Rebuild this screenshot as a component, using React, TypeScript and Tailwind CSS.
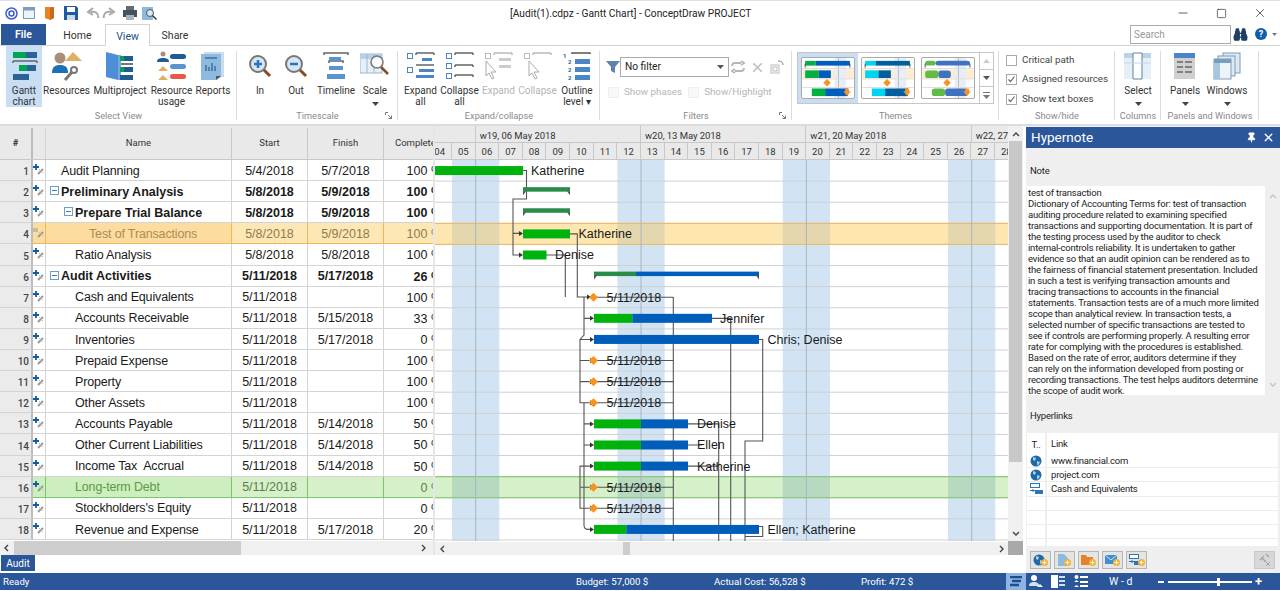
import React from 'react';
import { Binoculars, Minus, Pin, Square, X } from 'lucide-react';

const ROW_H = 21.11;
const rowY = (n: number) => 160 + ROW_H * (n - 0.5);
const dayX = (d: number) => 475.7 + (d - 6) * 23.62;

type Row = { n: number; name: string; indent: number; start: string; finish: string; pct: string; bold?: boolean; box?: boolean; tone?: 'orange' | 'green' };

const rows: Row[] = [
    { n: 1, name: 'Audit Planning', indent: 15, start: '5/4/2018', finish: '5/7/2018', pct: '100 %' },
    { n: 2, name: 'Preliminary Analysis', indent: 15, start: '5/8/2018', finish: '5/9/2018', pct: '100 %', bold: true, box: true },
    { n: 3, name: 'Prepare Trial Balance', indent: 29, start: '5/8/2018', finish: '5/9/2018', pct: '100 %', bold: true, box: true },
    { n: 4, name: 'Test of Transactions', indent: 43, start: '5/8/2018', finish: '5/9/2018', pct: '100 %', tone: 'orange' },
    { n: 5, name: 'Ratio Analysis', indent: 29, start: '5/8/2018', finish: '5/8/2018', pct: '100 %' },
    { n: 6, name: 'Audit Activities', indent: 15, start: '5/11/2018', finish: '5/17/2018', pct: '26 %', bold: true, box: true },
    { n: 7, name: 'Cash and Equivalents', indent: 29, start: '5/11/2018', finish: '', pct: '100 %' },
    { n: 8, name: 'Accounts Receivable', indent: 29, start: '5/11/2018', finish: '5/15/2018', pct: '33 %' },
    { n: 9, name: 'Inventories', indent: 29, start: '5/11/2018', finish: '5/17/2018', pct: '0 %' },
    { n: 10, name: 'Prepaid Expense', indent: 29, start: '5/11/2018', finish: '', pct: '100 %' },
    { n: 11, name: 'Property', indent: 29, start: '5/11/2018', finish: '', pct: '100 %' },
    { n: 12, name: 'Other Assets', indent: 29, start: '5/11/2018', finish: '', pct: '100 %' },
    { n: 13, name: 'Accounts Payable', indent: 29, start: '5/11/2018', finish: '5/14/2018', pct: '50 %' },
    { n: 14, name: 'Other Current Liabilities', indent: 29, start: '5/11/2018', finish: '5/14/2018', pct: '50 %' },
    { n: 15, name: 'Income Tax  Accrual', indent: 29, start: '5/11/2018', finish: '5/14/2018', pct: '50 %' },
    { n: 16, name: 'Long-term Debt', indent: 29, start: '5/11/2018', finish: '', pct: '0 %', tone: 'green' },
    { n: 17, name: "Stockholders's Equity", indent: 29, start: '5/11/2018', finish: '', pct: '0 %' },
    { n: 18, name: 'Revenue and Expense', indent: 29, start: '5/11/2018', finish: '5/17/2018', pct: '20 %' },
];

const noteLines = [
    'test of transaction',
    'Dictionary of Accounting Terms for: test of transaction',
    'auditing procedure related to examining specified',
    'transactions and supporting documentation. It is part of',
    'the testing process used by the auditor to check',
    'internal-controls reliability. It is undertaken to gather',
    'evidence so that an audit opinion can be rendered as to',
    'the fairness of financial statement presentation. Included',
    'in such a test is verifying transaction amounts and',
    'tracing transactions to accounts in the financial',
    'statements. Transaction tests are of a much more limited',
    'scope than analytical review. In transaction tests, a',
    'selected number of specific transactions are tested to',
    'see if controls are performing properly. A resulting error',
    'rate for complying with the procedures is established.',
    'Based on the rate of error, auditors determine if they',
    'can rely on the information developed from posting or',
    'recording transactions. The test helps auditors determine',
    'the scope of audit work.',
];

function Caret({ dim }: { dim?: boolean }) {
    return (
        <svg width="7" height="4" viewBox="0 0 7 4" className="mx-auto">
            <path d="M0 0h7L3.5 4z" fill={dim ? '#999' : '#444'} />
        </svg>
    );
}

function RibbonButton({ w, label, sub, icon, dim, caret, active }: { w: number; label: string; sub?: string; icon: React.ReactNode; dim?: boolean; caret?: boolean; active?: boolean }) {
    return (
        <div style={{ width: w }} className={`flex flex-col items-center pt-[4px] shrink-0 h-[61px] ${active ? 'bg-[#c9ddf3]' : ''}`}>
            <div className="h-[32px] flex items-center justify-center">{icon}</div>
            <div className={`mt-[3px] text-[10px] leading-[11px] text-center whitespace-nowrap ${dim ? 'text-[#b5b5b5]' : 'text-[#333]'}`}>{label}</div>
            {sub && <div className={`text-[10px] leading-[11px] text-center whitespace-nowrap ${dim ? 'text-[#b5b5b5]' : 'text-[#333]'}`}>{sub}</div>}
            {caret && <div className="mt-[6px]"><Caret /></div>}
        </div>
    );
}

function Group({ w, label, launcher, children }: { w: number; label: string; launcher?: boolean; children: React.ReactNode }) {
    return (
        <div style={{ width: w }} className="relative shrink-0 flex flex-col h-[78px] after:absolute after:right-0 after:top-[5px] after:bottom-[4px] after:w-px after:bg-[#dcdcdc]">
            <div className="flex-1 flex min-h-0">{children}</div>
            <div className="h-[16px] leading-[16px] text-[9.2px] text-[#8a8a8a] text-center whitespace-nowrap">{label}</div>
            {launcher && (
                <svg width="7" height="7" viewBox="0 0 7 7" className="absolute right-[6px] bottom-[5px]">
                    <path d="M.5 3V.5H3M6.5 6.5L3 3M6.5 3.5v3h-3" stroke="#777" fill="none" />
                </svg>
            )}
        </div>
    );
}

function GanttIcon() {
    return (
        <svg width="28" height="28" viewBox="0 0 28 28">
            <rect x="3" y="0" width="13" height="6" fill="#00a651" />
            <rect x="16" y="0" width="11" height="6" fill="#2a6496" />
            <path d="M3 9h24M3 9v2M27 9v2" stroke="#666" strokeWidth="1.5" />
            <rect x="9" y="13" width="8" height="6" fill="#00a651" />
            <rect x="17" y="13" width="9" height="6" fill="#2a6496" />
            <rect x="3" y="22" width="16" height="6" fill="#2a6496" />
        </svg>
    );
}

function ResourcesIcon() {
    return (
        <svg width="30" height="30" viewBox="0 0 30 30">
            <circle cx="8" cy="7" r="5.5" fill="#a98d78" />
            <path d="M0 22c0-6 3-8 8-8s8 2 8 8z" fill="#1f6fb5" />
            <path d="M13 10L21 1l9 9z" fill="#e0b060" />
            <path d="M13 29l7-8" stroke="#777" strokeWidth="3" />
            <circle cx="22" cy="19" r="3" fill="none" stroke="#777" strokeWidth="2" />
        </svg>
    );
}

function MultiprojectIcon() {
    return (
        <svg width="28" height="28" viewBox="0 0 28 28">
            <path d="M0 0l12 3v25L0 25z" fill="#4d8fd6" />
            <path d="M12 3h3v25h-3z" fill="#77a7dc" />
            <rect x="14" y="4" width="13" height="5" fill="#1f5c94" />
            <rect x="14" y="4" width="4" height="5" fill="#00a651" />
            <path d="M15 12h12" stroke="#777" strokeWidth="2" />
            <rect x="14" y="15" width="13" height="5" fill="#1f5c94" />
            <rect x="14" y="15" width="4" height="5" fill="#00a651" />
            <rect x="14" y="23" width="13" height="5" fill="#1f5c94" />
        </svg>
    );
}

function UsageIcon() {
    return (
        <svg width="30" height="30" viewBox="0 0 30 30">
            <circle cx="6" cy="3" r="2.5" fill="#a98d78" />
            <path d="M0 11c0-3 2-4 6-4s6 1 6 4z" fill="#1f5c94" />
            <path d="M1 20l5-5 5 5zM1 29l5-5 5 5z" fill="#e0b060" />
            <rect x="13" y="3" width="16" height="5" rx="2.5" fill="#1f5c94" />
            <rect x="13" y="13" width="16" height="5" rx="2.5" fill="#5b93d0" />
            <rect x="13" y="23" width="16" height="5" rx="2.5" fill="#e8584c" />
        </svg>
    );
}

function ReportsIcon() {
    return (
        <svg width="24" height="28" viewBox="0 0 24 28">
            <rect x="3" y="0" width="20" height="25" fill="#c9dcec" />
            <path d="M0 2h20v23l-5 3H0z" fill="#8dbbe0" />
            <path d="M4 6h12M5 19v-6M8 19v-4M11 19v-8M14 19v-5" stroke="#3f6f99" strokeWidth="1.5" />
            <path d="M15 28v-4h5z" fill="#555" />
        </svg>
    );
}

function ZoomIcon({ minus }: { minus?: boolean }) {
    return (
        <svg width="24" height="24" viewBox="0 0 24 24">
            <path d="M15 15l7 7" stroke="#8a4b22" strokeWidth="3" />
            <circle cx="10" cy="10" r="8" fill="#d6e6f5" stroke="#777" strokeWidth="2" />
            <path d={minus ? 'M6 10h8' : 'M6 10h8M10 6v8'} stroke="#2a74ba" strokeWidth="2.5" />
        </svg>
    );
}

function TimelineIcon() {
    return (
        <svg width="26" height="28" viewBox="0 0 26 28">
            <path d="M1 3V1h24v2M6 11V9h14v2" stroke="#666" strokeWidth="1.5" fill="none" />
            <rect x="6" y="5" width="12" height="4" fill="#5b93d0" />
            <rect x="6" y="14" width="14" height="4" fill="#5b93d0" />
            <rect x="4" y="22" width="18" height="5" fill="#5b93d0" />
        </svg>
    );
}

function ScaleIcon() {
    return (
        <svg width="30" height="26" viewBox="0 0 30 26">
            <rect x="0" y="1" width="22" height="19" fill="#e6f0f8" stroke="#9db8d0" />
            <rect x="0" y="1" width="22" height="5" fill="#b8d0e6" />
            <path d="M7 1v19M14 1v19" stroke="#9db8d0" />
            <path d="M21 14l7 7" stroke="#8a4b22" strokeWidth="2.5" />
            <circle cx="17" cy="9" r="6" fill="#ffffffcc" stroke="#777" strokeWidth="1.5" />
        </svg>
    );
}

function TreeIcon({ kind, dim }: { kind: 'expand' | 'collapse' | 'expand2' | 'collapse2'; dim?: boolean }) {
    const line = dim ? '#bbb' : '#666';
    const bar = dim ? '#ccc' : '#4a86c5';
    return (
        <svg width="30" height="28" viewBox="0 0 30 28">
            <rect x="1.5" y="1.5" width="5" height="5" fill="none" stroke={dim ? '#bbb' : '#4a86c5'} />
            <path d="M10 1h18M10 1v2M28 1v2" stroke={line} strokeWidth="1.5" fill="none" />
            {kind === 'expand' && (
                <>
                    <rect x="16" y="6" width="10" height="3" fill={bar} />
                    <rect x="1.5" y="15.5" width="5" height="5" fill="none" stroke="#4a86c5" />
                    <path d="M10 13h18" stroke={line} strokeWidth="1.5" />
                    <rect x="13" y="17" width="15" height="3" fill={bar} />
                    <rect x="10" y="23" width="18" height="3" fill={bar} />
                </>
            )}
            {kind === 'collapse' && (
                <>
                    <rect x="1.5" y="11.5" width="5" height="5" fill="none" stroke="#4a86c5" />
                    <path d="M10 13h18M10 13v2M28 13v2" stroke={line} strokeWidth="1.5" fill="none" />
                    <rect x="1.5" y="21.5" width="5" height="5" fill="none" stroke="#4a86c5" />
                    <path d="M10 23h18M10 23v2M28 23v2" stroke={line} strokeWidth="1.5" fill="none" />
                </>
            )}
            {kind === 'expand2' && (
                <>
                    <rect x="15" y="6" width="12" height="3" fill={bar} />
                    <rect x="15" y="13" width="12" height="3" fill={bar} />
                    <path d="M2 9v15l3-3 3 6 2-1-3-6h5z" fill="#fff" stroke="#aaa" />
                </>
            )}
            {kind === 'collapse2' && <path d="M6 9v15l3-3 3 6 2-1-3-6h5z" fill="#fff" stroke="#aaa" />}
        </svg>
    );
}

function OutlineIcon() {
    return (
        <svg width="28" height="28" viewBox="0 0 28 28">
            <path d="M9 2V1h18v1" stroke="#555" fill="none" strokeWidth="1.5" />
            <text x="0" y="6" fontSize="6" fontWeight="700" fill="#1f5c94">1</text>
            <text x="5" y="12" fontSize="6" fontWeight="700" fill="#1f5c94">2</text>
            <text x="5" y="20" fontSize="6" fontWeight="700" fill="#1f5c94">2</text>
            <text x="5" y="28" fontSize="6" fontWeight="700" fill="#1f5c94">2</text>
            <rect x="12" y="7" width="15" height="5" fill="#4a86c5" />
            <rect x="12" y="15" width="15" height="5" fill="#4a86c5" />
            <rect x="12" y="23" width="15" height="5" fill="#4a86c5" />
        </svg>
    );
}

function ThemeThumb({ a, b, round, selected }: { a: string; b: string; round?: boolean; selected?: boolean }) {
    const r = round ? 3 : 0;
    return (
        <div className={`shrink-0 flex items-center justify-center h-[50px] w-[60px] ${selected ? 'bg-[#c9ddf3]' : ''}`}>
            <svg width="54" height="42" viewBox="0 0 54 42" className="rounded-[2px] border border-[#aaa] bg-white">
                <rect x="0" y="12" width="54" height="10" fill="#fdecd2" />
                <rect x="34" y="0" width="12" height="42" fill="#e8eef7" />
                <path d="M38 0v42" stroke="#bbb" />
                <path d="M0 22h54M0 31h54M0 11h54" stroke="#ddd" />
                <rect x="3" y="3" width="11" height="5" fill={a} rx={r} />
                <rect x="14" y="3" width="36" height="5" fill={b} rx={r} />
                <path d="M3 6v4M50 6v4" stroke="#444" />
                <rect x="3" y="13" width="14" height="8" fill={a} rx={r} />
                <rect x="17" y="13" width="13" height="8" fill={b} rx={r} />
                <path d="M26 22l4 4-4 4-4-4z" fill="#f7931e" />
                <rect x="10" y="32" width="14" height="8" fill={a} rx={r} />
                <rect x="24" y="32" width="24" height="8" fill={b} rx={r} />
                <path d="M45 32h4v3h2l-4 5-4-5h2z" fill="#f7931e" />
            </svg>
        </div>
    );
}

function Check({ on, dim, label }: { on?: boolean; dim?: boolean; label: string }) {
    return (
        <div className={`flex items-center gap-[5px] text-[9.8px] whitespace-nowrap ${dim ? 'text-[#b5b5b5]' : 'text-[#444]'}`}>
            <div className={`w-[11px] h-[11px] border flex items-center justify-center shrink-0 ${dim ? 'border-[#eee] bg-[#f8f8f8]' : 'border-[#aaa]'}`}>
                {on && (
                    <svg width="9" height="9" viewBox="0 0 9 9">
                        <path d="M1.5 4.5l2 2 4-5" stroke="#666" strokeWidth="1.2" fill="none" />
                    </svg>
                )}
            </div>
            {label}
        </div>
    );
}

function Ribbon() {
    return (
        <div className="h-[78px] flex bg-white shrink-0">
            <Group w={237} label="Select View">
                <div className="w-[6px]" />
                <RibbonButton w={36} label="Gantt" sub="chart" icon={<GanttIcon />} active />
                <RibbonButton w={49} label="Resources" icon={<ResourcesIcon />} />
                <RibbonButton w={58} label="Multiproject" icon={<MultiprojectIcon />} />
                <RibbonButton w={45} label="Resource" sub="usage" icon={<UsageIcon />} />
                <RibbonButton w={38} label="Reports" icon={<ReportsIcon />} />
            </Group>
            <Group w={161} label="Timescale" launcher>
                <div className="w-[6px]" />
                <RibbonButton w={34} label="In" icon={<ZoomIcon />} />
                <RibbonButton w={38} label="Out" icon={<ZoomIcon minus />} />
                <RibbonButton w={42} label="Timeline" icon={<TimelineIcon />} />
                <RibbonButton w={36} label="Scale" caret icon={<ScaleIcon />} />
            </Group>
            <Group w={202} label="Expand/collapse">
                <div className="w-[3px]" />
                <RibbonButton w={39} label="Expand" sub="all" icon={<TreeIcon kind="expand" />} />
                <RibbonButton w={39} label="Collapse" sub="all" icon={<TreeIcon kind="collapse" />} />
                <RibbonButton w={39} label="Expand" dim icon={<TreeIcon kind="expand2" dim />} />
                <RibbonButton w={39} label="Collapse" dim icon={<TreeIcon kind="collapse2" dim />} />
                <RibbonButton w={40} label="Outline" sub="level ▾" icon={<OutlineIcon />} />
            </Group>
            <Group w={192} label="Filters" launcher>
                <div className="flex-1 pl-[6px] pt-[11px] flex flex-col">
                    <div className="flex items-center h-[20px]">
                        <svg width="14" height="14" viewBox="0 0 14 14" className="shrink-0">
                            <path d="M0 1h14L9 7v6L5 11V7z" fill="#5d84a8" />
                        </svg>
                        <div className="w-[109px] h-[20px] border border-[#ababab] flex items-center justify-between pl-[4px] pr-[4px] text-[10.2px] text-[#222]">
                            No filter
                            <svg width="7" height="4" viewBox="0 0 7 4"><path d="M0 0h7L3.5 4z" fill="#555" /></svg>
                        </div>
                        <svg width="14" height="14" viewBox="0 0 14 14" className="ml-[2px] shrink-0">
                            <path d="M1 6c0-2 1-3 3-3h6M10 1l3 2-3 2M13 8c0 2-1 3-3 3H4M4 9l-3 2 3 2" stroke="#b5b5b5" strokeWidth="1.8" fill="none" />
                        </svg>
                        <X size={15} color="#bdbdbd" strokeWidth={2.5} className="ml-[5px] shrink-0" />
                        <svg width="14" height="14" viewBox="0 0 14 14" className="ml-[5px] shrink-0">
                            <rect x="1" y="5" width="8" height="8" fill="none" stroke="#bbb" />
                            <rect x="3" y="7" width="4" height="4" fill="none" stroke="#bbb" />
                            <path d="M8 1c3 0 5 1 5 4" stroke="#888" fill="none" />
                        </svg>
                    </div>
                    <div className="flex mt-[8px] pl-[2px] gap-[6px]">
                        <Check dim label="Show phases" />
                        <Check dim label="Show/Highlight" />
                    </div>
                </div>
            </Group>
            <Group w={207} label="Themes">
                <div className="ml-[5px] mt-[6px] h-[52px] w-[197px] border border-[#c6c6c6] flex items-center">
                    <ThemeThumb a="#00b140" b="#005dba" selected />
                    <ThemeThumb a="#00d4f0" b="#005f9e" />
                    <ThemeThumb a="#62bb46" b="#3f72bf" round />
                    <div className="ml-auto w-[14px] h-full border-l border-[#c6c6c6] flex flex-col text-[#777]">
                        <div className="flex-1 flex items-center justify-center border-b border-[#c6c6c6]">
                            <svg width="7" height="4" viewBox="0 0 7 4"><path d="M0 4h7L3.5 0z" fill="#ccc" /></svg>
                        </div>
                        <div className="flex-1 flex items-center justify-center border-b border-[#c6c6c6]">
                            <svg width="7" height="4" viewBox="0 0 7 4"><path d="M0 0h7L3.5 4z" fill="#555" /></svg>
                        </div>
                        <div className="flex-1 flex items-center justify-center">
                            <svg width="7" height="7" viewBox="0 0 7 7"><path d="M0 0h7v1H0zM0 3h7L3.5 7z" fill="#777" /></svg>
                        </div>
                    </div>
                </div>
            </Group>
            <Group w={116} label="Show/hide">
                <div className="pl-[7px] pt-[7px] flex flex-col gap-[5px] [&>div]:h-[14.5px]">
                    <Check label="Critical path" />
                    <Check on label="Assigned resources" />
                    <Check on label="Show text boxes" />
                </div>
            </Group>
            <Group w={46} label="Columns">
                <RibbonButton
                    w={46}
                    label="Select"
                    caret
                    icon={
                        <svg width="28" height="28" viewBox="0 0 28 28">
                            <rect x="0" y="1" width="27" height="26" fill="#e4eff8" />
                            <rect x="0" y="1" width="27" height="5" fill="#b9d4ea" />
                            <path d="M9 1h9v26H9z" fill="#fff" stroke="#5d84a8" />
                            <path d="M0 11h27" stroke="#c5d8e8" />
                        </svg>
                    }
                />
            </Group>
            <Group w={98} label="Panels and Windows">
                <div className="w-[3px]" />
                <RibbonButton
                    w={42}
                    label="Panels"
                    caret
                    icon={
                        <svg width="22" height="26" viewBox="0 0 22 26">
                            <rect x="0" y="0" width="21" height="26" fill="#d0d0d0" />
                            <rect x="0" y="0" width="21" height="5" fill="#4a86c5" />
                            <path d="M3 9h6M11 9h7M3 14h6M11 14h7M3 19h6M11 19h7" stroke="#666" strokeWidth="1.5" />
                        </svg>
                    }
                />
                <RibbonButton
                    w={42}
                    label="Windows"
                    caret
                    icon={
                        <svg width="28" height="28" viewBox="0 0 28 28">
                            <rect x="10" y="1" width="17" height="20" fill="#dfe9f3" stroke="#7a9dbd" />
                            <rect x="5" y="4" width="17" height="20" fill="#dfe9f3" stroke="#7a9dbd" />
                            <rect x="1" y="7" width="17" height="20" fill="#eef3f8" stroke="#7a9dbd" />
                            <rect x="1" y="7" width="17" height="4" fill="#7a9dbd" />
                            <rect x="1" y="11" width="6" height="16" fill="#a8c5df" />
                        </svg>
                    }
                />
            </Group>
        </div>
    );
}

function TitleBar() {
    return (
        <div className="h-[23px] flex items-center shrink-0 border-t border-[#e2e2e2] pt-[2px]">
            <div className="w-[510px] flex items-center pl-[5px] shrink-0">
                <svg width="13" height="13" viewBox="0 0 13 13">
                    <circle cx="6.5" cy="6.5" r="5.5" fill="none" stroke="#3a5fd0" strokeWidth="1.5" />
                    <circle cx="6.5" cy="6.5" r="2.5" fill="none" stroke="#3a5fd0" strokeWidth="1.5" />
                </svg>
                <svg width="13" height="13" viewBox="0 0 13 13" className="ml-[5px]">
                    <rect x=".5" y=".5" width="11" height="11" fill="#eef4fa" stroke="#7a9dbd" />
                    <rect x=".5" y=".5" width="11" height="3" fill="#7a9dbd" />
                </svg>
                <svg width="12" height="14" viewBox="0 0 12 14" className="ml-[8px]">
                    <path d="M1 1h9v11l-4 2-5-2z" fill="#e8822a" />
                    <path d="M6 2l4-1v11l-4 2z" fill="#c96a18" />
                </svg>
                <svg width="14" height="14" viewBox="0 0 14 14" className="ml-[8px]">
                    <path d="M0 0h12l2 2v12H0z" fill="#1f5c9e" />
                    <rect x="3" y="1" width="8" height="5" fill="#fff" />
                    <rect x="3" y="9" width="8" height="5" fill="#c9dcec" />
                </svg>
                <svg width="15" height="12" viewBox="0 0 15 12" className="ml-[7px]">
                    <path d="M13.5 11c0-5-3-7-8-6M8 1L3 5l5 3" stroke="#a9a9a9" strokeWidth="2" fill="none" />
                </svg>
                <svg width="15" height="12" viewBox="0 0 15 12" className="ml-[2px]">
                    <path d="M1.5 11c0-5 3-7 8-6M7 1l5 4-5 3" stroke="#a9a9a9" strokeWidth="2" fill="none" />
                </svg>
                <svg width="14" height="14" viewBox="0 0 14 14" className="ml-[6px]">
                    <rect x="3" y="0" width="8" height="4" fill="#5f6b75" />
                    <rect x="0" y="4" width="14" height="7" fill="#46525c" />
                    <rect x="3" y="9" width="8" height="5" fill="#aab4bd" />
                </svg>
                <svg width="15" height="15" viewBox="0 0 15 15" className="ml-[5px]">
                    <rect x="0" y="1" width="11" height="13" fill="#8dbbe0" />
                    <circle cx="8" cy="7" r="3.5" fill="#d6e6f5" stroke="#555" />
                    <path d="M10.5 9.5l4 4" stroke="#333" strokeWidth="1.5" />
                </svg>
            </div>
            <div className="flex-1 pt-[1px] text-[10.2px] text-[#222] whitespace-nowrap">[Audit(1).cdpz - Gantt Chart] - ConceptDraw PROJECT</div>
            <div className="flex items-center pr-[13px] gap-[26px] text-[#222]">
                <Minus size={14} strokeWidth={1.2} />
                <Square size={11} strokeWidth={1.4} />
                <X size={14} strokeWidth={1.2} />
            </div>
        </div>
    );
}

function TabRow() {
    return (
        <div className="h-[23px] flex items-end shrink-0 border-b border-[#d4d4d4] text-[10.5px] text-[#333]">
            <div className="ml-[1px] w-[45px] h-[21px] pt-[1px] flex items-center justify-center text-white font-semibold bg-[#2b579a]">File</div>
            <div className="w-[59px] h-[21px] pt-[2px] flex items-center justify-center pl-[4px]">Home</div>
            <div className="w-[45px] h-[22px] pt-[2px] -mb-px flex items-center justify-center bg-white border border-b-0 border-[#d4d4d4] text-[#1f4e8c]">View</div>
            <div className="w-[50px] h-[21px] pt-[2px] flex items-center justify-center">Share</div>
            <div className="ml-auto flex items-center h-[22px]">
                <div className="w-[101px] h-[19px] border border-[#ababab] pl-[3px] text-[10px] leading-[17px] text-[#999]">Search</div>
                <Binoculars size={15} color="#1f3f66" fill="#1f3f66" className="ml-[2px]" />
                <div className="ml-[7px] w-[12px] h-[12px] rounded-full bg-[#0f5cad] text-white text-[9px] font-bold leading-[12px] text-center">?</div>
                <svg width="5" height="3" viewBox="0 0 5 3" className="ml-[5px] mr-[3px]"><path d="M0 0h5L2.5 3z" fill="#777" /></svg>
            </div>
        </div>
    );
}

function TaskIcon({ dim }: { dim?: boolean }) {
    return (
        <svg width="12" height="12" viewBox="0 0 12 12">
            {dim ? <path d="M0 2h5M0 4h5" stroke="#999" strokeWidth="1.2" /> : <path d="M3 0v6M0 3h6" stroke="#0f5c9e" strokeWidth="1.8" />}
            <path d="M5 10l5-5" stroke="#999" strokeWidth="2" />
            <path d="M6 5l4 4" stroke="#bbb" strokeWidth="1" />
        </svg>
    );
}

function TaskTable() {
    return (
        <div className="w-[433px] shrink-0 flex flex-col font-['Liberation_Sans'] text-[12.5px] text-[#1a1a1a]">
            <div className="h-[34px] flex bg-[#e9e9e9] border-b border-[#c8c8c8] font-['Roboto'] text-[9.5px] text-[#333] shrink-0 pt-[2px]">
                <div className="w-[33px] border-r-2 border-[#bdbdbd] flex items-center justify-center font-bold">#</div>
                <div className="w-[13px] border-r border-[#d4d4d4]" />
                <div className="w-[186px] border-r border-[#c8c8c8] flex items-center justify-center">Name</div>
                <div className="w-[76px] border-r border-[#c8c8c8] flex items-center justify-center">Start</div>
                <div className="w-[76px] border-r border-[#c8c8c8] flex items-center justify-center">Finish</div>
                <div className="w-[49px] overflow-hidden flex items-center">
                    <span className="pl-[11px] whitespace-nowrap">Complete</span>
                </div>
            </div>
            {rows.map((r) => {
                const name = r.tone === 'orange' ? 'bg-[#fddca0] border-[#f2b65a] text-[#b08a55]' : r.tone === 'green' ? 'bg-[#cdeebf] border-[#7cc66a] text-[#5f9a3f]' : 'bg-white border-[#d4d4d4]';
                const cell = r.tone === 'orange' ? 'bg-[#fde7b5] border-[#f2b65a] text-[#8f7a50]' : r.tone === 'green' ? 'bg-[#d6f1c9] border-[#7cc66a] text-[#5a7f4a]' : 'bg-white border-[#d4d4d4]';
                return (
                    <div key={r.n} className={`h-[21.11px] flex shrink-0 ${r.bold ? 'font-bold' : ''}`}>
                        <div className="w-[33px] bg-[#ebebeb] border-b border-r-2 border-b-[#d4d4d4] border-r-[#bdbdbd] flex items-end justify-end pr-[2px] pb-[1px] font-['Roboto'] text-[10px] font-medium text-[#444]">{r.n}</div>
                        <div className={`w-[13px] border-b border-r flex items-center justify-center ${name}`}>
                            <TaskIcon dim={r.tone === 'orange'} />
                        </div>
                        <div className={`w-[186px] border-b border-r flex items-center whitespace-pre relative pt-[2px] ${r.bold ? '' : 'tracking-[-0.15px]'} ${name}`} style={{ paddingLeft: r.indent }}>
                            {r.box && (
                                <div className="absolute top-[5px] w-[9px] h-[9px] border border-[#6aa0c8] flex items-center justify-center" style={{ left: r.indent - 11 }}>
                                    <div className="w-[5px] h-px bg-[#3f7fae]" />
                                </div>
                            )}
                            {r.name}
                        </div>
                        <div className={`w-[76px] border-b border-r flex items-center justify-center pt-[2px] ${cell}`}>{r.start}</div>
                        <div className={`w-[76px] border-b border-r flex items-center justify-center pt-[2px] ${cell}`}>{r.finish}</div>
                        <div className={`w-[49px] border-b overflow-hidden ${cell}`}>
                            <div className="w-[58px] text-right whitespace-nowrap leading-[22px]">{r.pct}</div>
                        </div>
                    </div>
                );
            })}
            <div className="mt-[1px] flex-1 bg-[#f0f0f0] flex items-center">
                <svg width="6" height="8" viewBox="0 0 6 8" className="ml-[3px]"><path d="M5 1L2 4l3 3" stroke="#444" strokeWidth="1.4" fill="none" /></svg>
                <div className="ml-[5px] w-[227px] h-full bg-[#cdcdcd]" />
                <svg width="6" height="8" viewBox="0 0 6 8" className="ml-auto mr-[6px]"><path d="M1 1l3 3-3 3" stroke="#444" strokeWidth="1.4" fill="none" /></svg>
            </div>
        </div>
    );
}

const weekends = [5, 12, 19, 26];
const weekLines = [6, 13, 20, 27];
const DIAMONDS = [7, 10, 11, 12, 16, 17];

function Bar({ n, x1, mid, x2 }: { n: number; x1: number; mid: number; x2: number }) {
    const y = rowY(n) - 4.5;
    return (
        <>
            <rect x={x1} y={y} width={mid - x1} height="9" fill="#00b30c" />
            <rect x={mid} y={y} width={x2 - mid} height="9" fill="#005dba" />
        </>
    );
}

function Summary({ n, x1, mid, x2 }: { n: number; x1: number; mid: number; x2: number }) {
    const y = rowY(n) - 4.5;
    return (
        <>
            <rect x={x1} y={y} width={mid - x1} height="4.5" fill="#2a8c4a" />
            {x2 > mid && <rect x={mid} y={y} width={x2 - mid} height="4.5" fill="#005dba" />}
            <path d={`M${x1} ${y + 4}h3l-3 4zM${x2} ${y + 4}h-3l3 4z`} fill="#555" />
        </>
    );
}

function Arrow({ x, y }: { x: number; y: number }) {
    return <path d={`M${x - 4} ${y - 2.5}l4 2.5-4 2.5z`} fill="#333" />;
}

function GanttChart() {
    const y = rowY;
    const line = '#555';
    return (
        <div className="w-[573px] shrink-0 flex flex-col">
            <div className="h-[34px] shrink-0 overflow-hidden bg-[#e9e9e9] font-['Roboto'] text-[9.5px] text-[#333] flex flex-col">
                <div className="h-[17px] flex border-b border-[#c8c8c8]">
                    <div className="w-[40.7px] shrink-0 border-r border-[#c8c8c8]" />
                    {['w19, 06 May 2018', 'w20, 13 May 2018', 'w21, 20 May 2018', 'w22, 27 May 2018'].map((w) => (
                        <div key={w} className="w-[165.34px] shrink-0 border-r border-[#c8c8c8] pl-[4px] leading-[19px] whitespace-nowrap tracking-[-0.05px]">{w}</div>
                    ))}
                </div>
                <div className="h-[17px] flex -ml-[6.6px] border-b border-[#c8c8c8]">
                    {Array.from({ length: 25 }, (_, i) => i + 4).map((d) => (
                        <div key={d} className="w-[23.62px] shrink-0 border-r border-[#c8c8c8] text-center leading-[18px]">{String(d).padStart(2, '0')}</div>
                    ))}
                </div>
            </div>
            <svg width="573" height="381" viewBox="435 160 573 381" className="block shrink-0 font-['Liberation_Sans']">
                <rect x="435" y="160" width="573" height="381" fill="#fff" />
                {weekends.map((d) => (
                    <rect key={d} x={dayX(d)} y="160" width={23.62 * 2} height="381" fill="#d2e3f4" />
                ))}
                <rect x="435" y={y(4) - 10.5} width="573" height="21" fill="#fde6b0" />
                <rect x="435" y={y(16) - 10.5} width="573" height="21" fill="#d6f1c9" />
                {weekends.map((d) => (
                    <g key={d}>
                        <rect x={dayX(d)} y={y(4) - 10.5} width={23.62 * 2} height="21" fill="#e4d7ae" />
                        <rect x={dayX(d)} y={y(16) - 10.5} width={23.62 * 2} height="21" fill="#b6d9bf" />
                    </g>
                ))}
                {rows.map((r) => (
                    <path key={r.n} d={`M435 ${160 + ROW_H * r.n}h573`} stroke="#d0d0d0" />
                ))}
                <path d={`M435 ${y(4) - 10.5}h573M435 ${y(4) + 10.5}h573`} stroke="#f2b65a" />
                <path d={`M435 ${y(16) - 10.5}h573M435 ${y(16) + 10.5}h573`} stroke="#7cc66a" />
                {weekLines.map((d) => (
                    <path key={d} d={`M${dayX(d)} 160v381`} stroke="#a9b4c0" />
                ))}

                <g fill="none" stroke={line} strokeWidth="1.1">
                    <path d={`M523 ${y(1)}h3.5V199H513V${y(5)}H520M513 ${y(4) - 0.5}h7`} />
                    <path d={`M570 ${y(4)}h7.3V297H590M546 ${y(5)}h19.3V297`} />
                    <path d={`M584 297V335L580 339.4V${y(12)}H590M580 ${y(9)}h10M580 ${y(10)}h10M580 ${y(11)}h10`} />
                    <path d={`M584 ${y(8)}h6M584 ${y(12)}V525q0 4.4 4 4.4h2M584 ${y(13)}h6M584 ${y(14)}h6`} />
                    <path d={`M590 ${y(15)}H580V${y(17)}H590M580 ${y(16)}h10`} />
                    <path d="M673.3 297V541" />
                    {DIAMONDS.map((n) => (
                        <path key={n} d={`M597 ${y(n)}H673.3`} />
                    ))}
                    <path d={`M712 ${y(8)}h18.7V541`} />
                    <path d={`M688 ${y(13)}h30.7V541M688 ${y(14)}h14M688 ${y(15)}h30.7`} />
                    <path d={`M759 ${y(9)}h3.7V441H745V541M759 ${y(18) - 3}h3.7v10H745`} />
                </g>
                {[8, 9, 10, 11, 12, 13, 14, 15, 16, 17, 18].map((n) => (
                    <Arrow key={n} x={594} y={y(n)} />
                ))}
                <Arrow x={591} y={297} />
                <Arrow x={523} y={y(4) - 0.5} />
                <Arrow x={523} y={y(5)} />

                <rect x="435" y={y(1) - 4.5} width="88" height="9" fill="#00b30c" />
                <Summary n={2} x1={523} mid={570} x2={570} />
                <Summary n={3} x1={523} mid={570} x2={570} />
                <rect x="523" y={y(4) - 4.5} width="47" height="9" fill="#00b30c" />
                <rect x="523" y={y(5) - 4.5} width="23.5" height="9" fill="#00b30c" />
                <Summary n={6} x1={594} mid={636} x2={759} />
                <Bar n={8} x1={594} mid={632.3} x2={712} />
                <Bar n={9} x1={594} mid={594} x2={759} />
                <Bar n={13} x1={594} mid={641} x2={688} />
                <Bar n={14} x1={594} mid={641} x2={688} />
                <Bar n={15} x1={594} mid={641} x2={688} />
                <Bar n={18} x1={594} mid={626.3} x2={759} />
                {DIAMONDS.map((n) => (
                    <g key={n}>
                        <path d={`M593.5 ${y(n) - 4.5}l4.5 4.5-4.5 4.5-4.5-4.5z`} fill="#f7931e" />
                        <text x="606.5" y={y(n) + 4.5} fontSize="12.5" fill="#1a1a1a">5/11/2018</text>
                    </g>
                ))}
                <g fontSize="12.5" fill="#1a1a1a">
                    <text x="531" y={y(1) + 4.5}>Katherine</text>
                    <text x="578.5" y={y(4) + 4.5}>Katherine</text>
                    <text x="555" y={y(5) + 4.5}>Denise</text>
                    <text x="720" y={y(8) + 4.5}>Jennifer</text>
                    <text x="767.5" y={y(9) + 4.5}>Chris; Denise</text>
                    <text x="697" y={y(13) + 4.5}>Denise</text>
                    <text x="697" y={y(14) + 4.5}>Ellen</text>
                    <text x="697" y={y(15) + 4.5}>Katherine</text>
                    <text x="767.5" y={y(18) + 4.5}>Ellen; Katherine</text>
                </g>
            </svg>
            <div className="mt-[1px] flex-1 bg-[#f0f0f0] flex items-center relative">
                <svg width="6" height="8" viewBox="0 0 6 8" className="ml-[4px]"><path d="M5 1L2 4l3 3" stroke="#444" strokeWidth="1.4" fill="none" /></svg>
                <div className="ml-[178px] w-[7px] h-full bg-[#cdcdcd]" />
                <svg width="6" height="8" viewBox="0 0 6 8" className="ml-auto mr-[3px]"><path d="M1 1l3 3-3 3" stroke="#444" strokeWidth="1.4" fill="none" /></svg>
            </div>
        </div>
    );
}

function VScroll() {
    return (
        <div className="w-[15px] shrink-0 bg-[#f0f0f0] flex flex-col items-center">
            <div className="h-[15px] flex items-center">
                <svg width="8" height="6" viewBox="0 0 8 6"><path d="M1 5l3-3 3 3" stroke="#444" strokeWidth="1.4" fill="none" /></svg>
            </div>
            <div className="w-[13px] h-[321px] bg-[#c8c8c8]" />
            <div className="flex-1 flex items-end pb-[4px]">
                <svg width="8" height="6" viewBox="0 0 8 6"><path d="M1 1l3 3 3-3" stroke="#444" strokeWidth="1.4" fill="none" /></svg>
            </div>
            <div className="w-[15px] h-[14px] bg-[#a9a9a9] shrink-0" />
        </div>
    );
}

function Globe() {
    return (
        <svg width="12" height="12" viewBox="0 0 12 12">
            <circle cx="6" cy="6" r="5.5" fill="#1f6aa5" />
            <path d="M3 2l3 1-1 3-2-1zM7 6l3 1-2 4-1-2z" fill="#a8d0ea" />
        </svg>
    );
}

function TaskLinkIcon() {
    return (
        <svg width="13" height="12" viewBox="0 0 13 12">
            <rect x=".5" y=".5" width="9" height="4" fill="#fff" stroke="#2a74ba" />
            <path d="M0 7.5h6M3 6v3" stroke="#2a74ba" />
            <rect x="5" y="7" width="8" height="4" fill="#2a74ba" />
        </svg>
    );
}

function ToolButton({ children, dim }: { children: React.ReactNode; dim?: boolean }) {
    return <div className={`w-[21px] h-[18px] border flex items-center justify-center shrink-0 ${dim ? 'bg-[#d8d8d8] border-[#c8c8c8]' : 'bg-[#e4e4e4] border-[#b4b4b4]'}`}>{children}</div>;
}

const Plus = () => (
    <svg width="7" height="7" viewBox="0 0 7 7" className="-ml-[4px] mt-[6px]">
        <circle cx="3.5" cy="3.5" r="3.5" fill="#f2b233" />
        <path d="M1.5 3.5h4M3.5 1.5v4" stroke="#fff" />
    </svg>
);

function Hypernote() {
    return (
        <div className="w-[254px] shrink-0 bg-[#efefef] flex flex-col text-[#222] text-[9.5px] tracking-[-0.2px]">
            <div className="mt-[1px] h-[21px] shrink-0 bg-[#2b579a] text-white text-[13.5px] tracking-normal leading-[21px] pl-[5px] flex items-center justify-between pr-[5px]">
                Hypernote
                <div className="flex items-center gap-[5px]">
                    <Pin size={11} fill="#fff" />
                    <X size={13} strokeWidth={2.5} />
                </div>
            </div>
            <div className="h-[38px] shrink-0 pl-[4px] pt-[15px] leading-[16px]">Note</div>
            <div className="flex shrink-0 h-[209px]">
                <div className="ml-[1px] w-[238px] bg-white pl-[1px] pt-[1px] leading-[11px] whitespace-nowrap overflow-hidden">
                    {noteLines.map((l) => (
                        <div key={l}>{l}</div>
                    ))}
                </div>
                <div className="w-[15px] flex flex-col items-center justify-between py-[7px]">
                    <svg width="8" height="6" viewBox="0 0 8 6"><path d="M1 5l3-3 3 3" stroke="#c4c4c4" strokeWidth="1.4" fill="none" /></svg>
                    <svg width="8" height="6" viewBox="0 0 8 6"><path d="M1 1l3 3 3-3" stroke="#c4c4c4" strokeWidth="1.4" fill="none" /></svg>
                </div>
            </div>
            <div className="h-[38px] shrink-0 pl-[4px] pt-[13px] leading-[16px]">Hyperlinks</div>
            <div className="ml-[1px] mr-[2px] h-[113px] shrink-0 bg-white flex flex-col overflow-hidden">
                <div className="h-[21px] flex items-center shrink-0">
                    <div className="w-[20px] text-center border-r-2 border-[#efefef] h-full leading-[23px]">T..</div>
                    <div className="pl-[4px] pt-[2px]">Link</div>
                </div>
                {[
                    { icon: <Globe />, text: 'www.financial.com' },
                    { icon: <Globe />, text: 'project.com' },
                    { icon: <TaskLinkIcon />, text: 'Cash and Equivalents' },
                    { icon: null, text: '' },
                    { icon: null, text: '' },
                    { icon: null, text: '' },
                    { icon: null, text: '' },
                ].map((l, i) => (
                    <div key={i} className="h-[14.2px] shrink-0 flex items-center border-b border-[#ececec]">
                        <div className="w-[20px] h-full flex items-center justify-center border-r-2 border-[#efefef]">{l.icon}</div>
                        <div className="pl-[4px] pt-[1px] whitespace-nowrap">{l.text}</div>
                    </div>
                ))}
            </div>
            <div className="flex-1 flex items-center pl-[4px] pr-[5px] gap-[3px]">
                <ToolButton><Globe /><Plus /></ToolButton>
                <ToolButton>
                    <svg width="10" height="12" viewBox="0 0 10 12"><path d="M0 0h6l4 4v8H0z" fill="#8dbbe0" /></svg>
                    <Plus />
                </ToolButton>
                <ToolButton>
                    <svg width="12" height="10" viewBox="0 0 12 10"><path d="M0 0h5l1 2h6v8H0z" fill="#e8822a" /></svg>
                    <Plus />
                </ToolButton>
                <ToolButton>
                    <svg width="12" height="9" viewBox="0 0 12 9"><rect width="12" height="9" fill="#3f8fd0" /><path d="M0 0l6 5 6-5" stroke="#cde4f5" fill="none" /></svg>
                    <Plus />
                </ToolButton>
                <ToolButton><TaskLinkIcon /><Plus /></ToolButton>
                <div className="ml-auto">
                    <ToolButton dim>
                        <svg width="13" height="13" viewBox="0 0 13 13">
                            <path d="M2 7l4-4M8 1l3 3M4 5l4 4" stroke="#a5a5a5" strokeWidth="1.5" />
                            <path d="M8 9l4 4M12 9l-4 4" stroke="#a5a5a5" />
                        </svg>
                    </ToolButton>
                </div>
            </div>
        </div>
    );
}

function StatusBar() {
    return (
        <div className="h-[17px] shrink-0 bg-[#2b579a] text-white text-[9.7px] leading-[18px] flex items-center relative">
            <div className="w-[576px] pl-[3px] shrink-0">Ready</div>
            <div className="w-[138px] shrink-0">Budget: 57,000 $</div>
            <div className="w-[147px] shrink-0">Actual Cost: 56,528 $</div>
            <div className="w-[145px] shrink-0">Profit: 472 $</div>
            <div className="w-[20px] h-full bg-[#8eb4e3] flex items-center justify-center shrink-0">
                <svg width="14" height="12" viewBox="0 0 14 12"><path d="M1 1h12M3 5h9M1 9h9" stroke="#1f4e8c" strokeWidth="2.4" /></svg>
            </div>
            <svg width="14" height="13" viewBox="0 0 14 13" className="ml-[3px] shrink-0">
                <circle cx="5" cy="3" r="3" fill="#fff" />
                <path d="M0 11c0-3 2-4 5-4s5 1 5 4z" fill="#cfe2f5" />
                <path d="M8 12l3-3 3 3z" fill="#fff" />
            </svg>
            <svg width="14" height="13" viewBox="0 0 14 13" className="ml-[8px] shrink-0">
                <path d="M0 0h7v13H0z" fill="#fff" />
                <path d="M8 2h6M8 6h6M8 10h6" stroke="#cfe2f5" strokeWidth="2" />
            </svg>
            <svg width="14" height="13" viewBox="0 0 14 13" className="ml-[9px] shrink-0">
                <circle cx="2.5" cy="2" r="2" fill="#fff" />
                <path d="M0 7l2.5-2 2.5 2zM0 12l2.5-2 2.5 2z" fill="#fff" />
                <path d="M6 2h8M6 7h8M6 11h8" stroke="#fff" strokeWidth="2" />
            </svg>
            <div className="ml-[21px] w-[49px] shrink-0 whitespace-nowrap text-[10.5px]">W - d</div>
            <div className="w-[6px] h-[2px] bg-white shrink-0" />
            <div className="ml-[4px] w-[84px] h-[2px] bg-white shrink-0 relative">
                <div className="absolute left-[49px] -top-[3px] w-[3px] h-[8px] bg-white" />
            </div>
            <div className="ml-[3px] text-[13px] font-bold leading-[17px]">+</div>
        </div>
    );
}

export default function App() {
    return (
        <div className="w-[1280px] h-[591px] overflow-hidden bg-white flex flex-col font-['Roboto']">
            <TitleBar />
            <TabRow />
            <Ribbon />
            <div className="h-[2px] shrink-0 bg-[#dcdcdc]" />
            <div className="h-[447px] flex shrink-0">
                <div className="w-[1026px] shrink-0 flex flex-col">
                    <div className="h-[429px] flex shrink-0">
                        <TaskTable />
                        <div className="w-[2px] bg-[#e6e6e6] shrink-0" />
                        <GanttChart />
                        <VScroll />
                    </div>
                    <div className="flex-1">
                        <div className="ml-[1px] w-[34px] h-[16px] bg-[#2b579a] text-white text-[10px] leading-[17px] text-center">Audit</div>
                    </div>
                </div>
                <Hypernote />
            </div>
            <StatusBar />
        </div>
    );
}
